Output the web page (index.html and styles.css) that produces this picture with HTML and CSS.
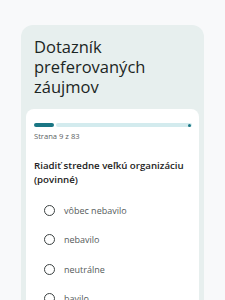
FILE: index.html
```html
<!DOCTYPE html>
<html lang="sk">
<head>
<meta charset="utf-8">
<link rel="stylesheet" href="styles.css">
</head>
<body>
<div class="shell">
  <h1 class="title">Dotazník preferovaných záujmov</h1>
  <div class="panel">
    <div class="progress">
      <div class="fill"></div>
      <div class="track"><span class="stop"></span></div>
    </div>
    <div class="page">Strana 9 z 83</div>
    <div class="question">Riadiť stredne veľkú organizáciu (povinné)</div>
    <ul class="options">
      <li class="option"><span class="radio"></span><span class="label">vôbec nebavilo</span></li>
      <li class="option"><span class="radio"></span><span class="label">nebavilo</span></li>
      <li class="option"><span class="radio"></span><span class="label">neutrálne</span></li>
      <li class="option"><span class="radio"></span><span class="label">bavilo</span></li>
    </ul>
  </div>
</div>
</body>
</html>
```
FILE: styles.css
```css
html, body { margin: 0; padding: 0; }
body {
  background: #f8f9fa;
  font-family: "Open Sans", "Noto Sans", sans-serif;
  height: 300px;
  overflow: hidden;
}
.shell {
  margin: 25px 21px 0 21px;
  background: #e7efee;
  border-radius: 12px 12px 0 0;
  padding: 12px 5px 0 5px;
  height: 300px;
  box-sizing: border-box;
}
.title {
  margin: 0 0 12px 0;
  padding: 0 8px;
  font-size: 16.5px;
  line-height: 20px;
  font-weight: 500;
  color: #1c2624;
  width: 140px;
}
.panel {
  background: #ffffff;
  border-radius: 8px;
  padding: 14px 8px 0 8px;
  height: 200px;
}
.progress {
  display: flex;
  gap: 2px;
  height: 4px;
  width: 158px;
}
.fill {
  width: 20px;
  background: #1a7684;
  border-radius: 2px;
}
.track {
  flex: 1;
  background: #d3ebee;
  border-radius: 2px;
  display: flex;
  justify-content: flex-end;
  align-items: center;
  padding-right: 1px;
}
.stop {
  width: 3px;
  height: 3px;
  border-radius: 50%;
  background: #1a7684;
}
.page {
  margin-top: 4px;
  font-size: 7.6px;
  line-height: 10px;
  color: #5a5f5f;
}
.question {
  margin-top: 18px;
  font-size: 9.7px;
  line-height: 14px;
  font-weight: 600;
  color: #222;
}
.options {
  list-style: none;
  margin: 8.5px 0 0 0;
  padding: 0 0 0 10px;
}
.option {
  display: flex;
  align-items: center;
  height: 29.5px;
}
.radio {
  width: 11px;
  height: 11px;
  box-sizing: border-box;
  border: 1.6px solid #3c4242;
  border-radius: 50%;
  margin-right: 9px;
}
.label {
  font-size: 9px;
  color: #555b5b;
}
```
